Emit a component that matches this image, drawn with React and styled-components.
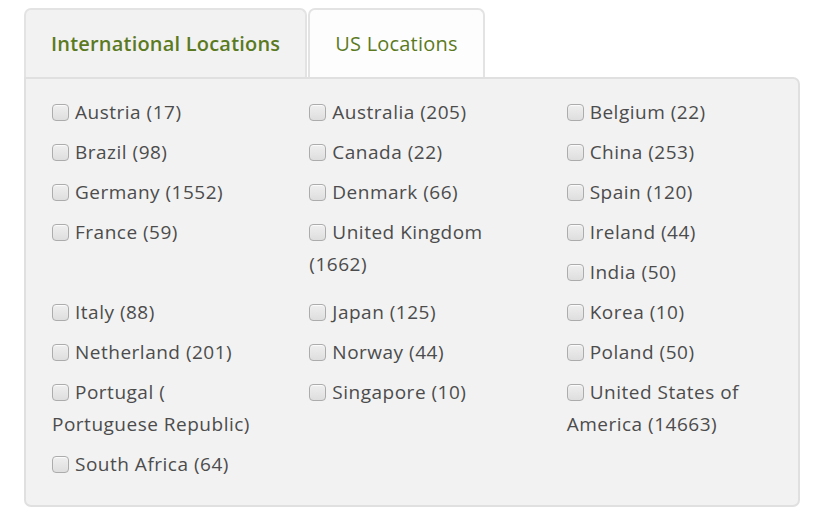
import React from 'react';
import styled, { createGlobalStyle } from 'styled-components';

const GlobalStyle = createGlobalStyle`
  body {
    margin: 0;
    background: #ffffff;
    font-family: "Open Sans", "Liberation Sans", sans-serif;
  }
`;

const locations = [
  ['Austria', 17], ['Australia', 205], ['Belgium', 22],
  ['Brazil', 98], ['Canada', 22], ['China', 253],
  ['Germany', 1552], ['Denmark', 66], ['Spain', 120],
  ['France', 59], ['United Kingdom', 1662], ['Ireland', 44],
  ['India', 50], ['Italy', 88], ['Japan', 125],
  ['Korea', 10], ['Netherland', 201], ['Norway', 44],
  ['Poland', 50], ['Portugal ( Portuguese Republic)', null],
  ['Singapore', 10], ['United States of America', 14663],
  ['South Africa', 64],
];

const Wrapper = styled.div`
  padding: 8px 25px 0 24px;
  width: 776px;
`;

const TabBar = styled.div`
  display: flex;
  gap: 1px;
`;

const Tab = styled.div`
  padding: 21px 25px 20px;
  line-height: 26px;
  font-size: 20px;
  letter-spacing: 0.2px;
  font-weight: ${p => (p.active ? 600 : 400)};
  color: #5b7a1f;
  background: ${p => (p.active ? '#f2f2f2' : '#fdfdfd')};
  border: 2px solid #e3e3e3;
  border-bottom: none;
  border-radius: 7px 7px 0 0;
`;

const Panel = styled.div`
  display: flow-root;
  background: #f2f2f2;
  border: 2px solid #e0e0e0;
  border-radius: 0 7px 7px 7px;
  padding: 17px 0 17px 26px;
`;

const List = styled.div`
  margin-right: -26px;
`;

const Item = styled.label`
  float: left;
  box-sizing: border-box;
  width: 33.333%;
  padding-right: 50px;
  margin-bottom: 8px;
  font-size: 19px;
  letter-spacing: 0.5px;
  line-height: 32px;
  color: #4c4c4c;
`;

const Box = styled.input`
  appearance: none;
  width: 17px;
  height: 17px;
  margin: 0 6px 0 0;
  vertical-align: -2px;
  border: 1px solid #acacac;
  border-radius: 4px;
  background: linear-gradient(#efefef, #dedede);
  box-shadow: inset 0 1px 1px rgba(255, 255, 255, 0.8);
`;

export default function App() {
  return (
    <Wrapper>
      <GlobalStyle />
      <TabBar>
        <Tab active>International Locations</Tab>
        <Tab>US Locations</Tab>
      </TabBar>
      <Panel>
        <List>
          {locations.map(([name, count]) => (
            <Item key={name}>
              <Box type="checkbox" />
              {count === null ? name : `${name} (${count})`}
            </Item>
          ))}
        </List>
      </Panel>
    </Wrapper>
  );
}
